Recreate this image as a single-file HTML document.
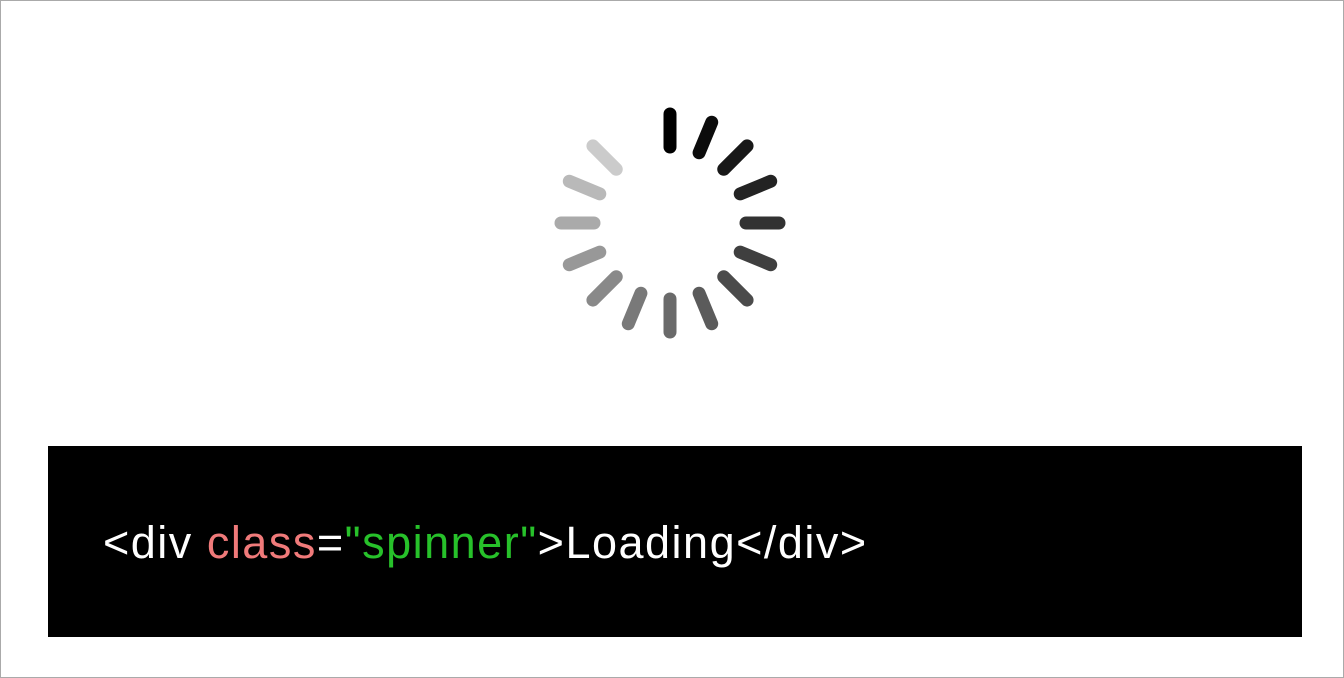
<!DOCTYPE html>
<html><head><meta charset="utf-8"><style>
html,body{margin:0;padding:0;}
body{width:1344px;height:678px;position:relative;background:#fff;overflow:hidden;}
.frame{position:absolute;left:0;top:0;width:1342px;height:676px;border:1px solid #aaa;}
.code{position:absolute;left:48px;top:446px;width:1254px;height:191px;background:#000;}
.txt{position:absolute;left:55px;top:71px;font-family:"Liberation Sans",sans-serif;font-size:45px;letter-spacing:1.5px;color:#fff;white-space:pre;line-height:52px;}
.r{color:#f07a7a}.g{color:#27c12a}
svg{position:absolute;left:0;top:0;}
</style></head><body>
<div class="frame"></div>
<svg width="1344" height="678">
<g transform="translate(670,223)" stroke-linecap="round" stroke-width="13">
<line x1="0" y1="-76" x2="0" y2="-109" stroke="#000" transform="rotate(0)"/>
<line x1="0" y1="-76" x2="0" y2="-109" stroke="#000" opacity="0.95" transform="rotate(22.5)"/>
<line x1="0" y1="-76" x2="0" y2="-109" stroke="#000" opacity="0.9" transform="rotate(45)"/>
<line x1="0" y1="-76" x2="0" y2="-109" stroke="#000" opacity="0.86" transform="rotate(67.5)"/>
<line x1="0" y1="-76" x2="0" y2="-109" stroke="#000" opacity="0.8" transform="rotate(90)"/>
<line x1="0" y1="-76" x2="0" y2="-109" stroke="#000" opacity="0.75" transform="rotate(112.5)"/>
<line x1="0" y1="-76" x2="0" y2="-109" stroke="#000" opacity="0.7" transform="rotate(135)"/>
<line x1="0" y1="-76" x2="0" y2="-109" stroke="#000" opacity="0.64" transform="rotate(157.5)"/>
<line x1="0" y1="-76" x2="0" y2="-109" stroke="#000" opacity="0.58" transform="rotate(180)"/>
<line x1="0" y1="-76" x2="0" y2="-109" stroke="#000" opacity="0.52" transform="rotate(202.5)"/>
<line x1="0" y1="-76" x2="0" y2="-109" stroke="#000" opacity="0.46" transform="rotate(225)"/>
<line x1="0" y1="-76" x2="0" y2="-109" stroke="#000" opacity="0.4" transform="rotate(247.5)"/>
<line x1="0" y1="-76" x2="0" y2="-109" stroke="#000" opacity="0.33" transform="rotate(270)"/>
<line x1="0" y1="-76" x2="0" y2="-109" stroke="#000" opacity="0.27" transform="rotate(292.5)"/>
<line x1="0" y1="-76" x2="0" y2="-109" stroke="#000" opacity="0.2" transform="rotate(315)"/>
</g></svg>
<div class="code"><div class="txt">&lt;div <span class="r">class</span>=<span class="g">"spinner"</span>&gt;Loading&lt;/div&gt;</div></div>
</body></html>
